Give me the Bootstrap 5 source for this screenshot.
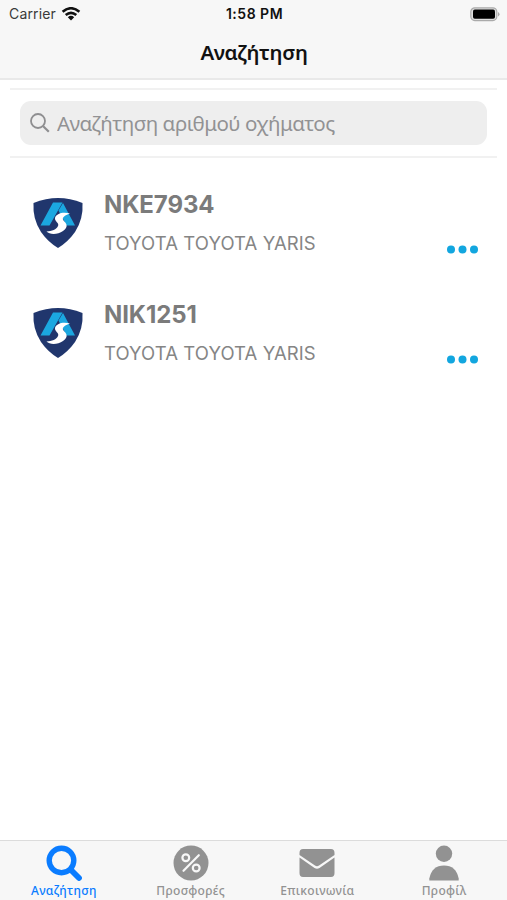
<!DOCTYPE html>
<html lang="el">
<head>
<meta charset="utf-8">
<meta name="viewport" content="width=device-width, initial-scale=1">
<title>Αναζήτηση</title>
<link href="https://cdn.jsdelivr.net/npm/bootstrap@5.3.0/dist/css/bootstrap.min.css" rel="stylesheet">
<style>
  body { font-family: Inter, "Noto Sans", sans-serif; background: #fff; }
  svg { display: block; flex: none; }
  .greek { font-family: "Noto Sans", sans-serif; }
  .top-bar { height: 80px; background: #f7f7f7; border-bottom: 2px solid #e9e9e9; }
  .status { height: 28px; padding: 0 7px 0 9px; font-size: 14px; line-height: 28px; color: #3a3a3a; }
  .carrier { letter-spacing: .15px; gap: 5px; }
  .clock { color: #111; font-weight: 600; font-size: 14px; letter-spacing: .5px; }
  .page-title { height: 50px; line-height: 49px; font-size: 20.5px; font-weight: 600; color: #111; letter-spacing: -.3px; padding-left: 1px; }
  .search-wrap { margin: 8px 10px 0; height: 70px; padding: 11px 10px 0; border-top: 2px solid #f1f1f1; border-bottom: 2px solid #f1f1f1; }
  .search-field { height: 44px; border-radius: 11px; background: #eee; padding: 0 10px; color: #8e8e90; }
  .search-field input, .search-field input:focus { font-size: 20.5px; line-height: 44px; letter-spacing: -.5px; color: #8e8e90; box-shadow: none; margin-left: 6px; }
  .search-field input::placeholder { color: #929294; opacity: 1; }
  .vehicles { padding-top: 12px; }
  .vehicle { height: 110px; padding: 20px 29px 0 32px; color: #7b7b7b; }
  .crest { margin-top: 7px; }
  .plate { font-size: 24px; line-height: 30px; font-weight: 700; letter-spacing: -.1px; }
  .model { font-size: 18.5px; line-height: 24px; margin-top: 11px; color: #858585; letter-spacing: .08px; }
  .more { padding-top: 54px; }
  .tab-bar { height: 60px; background: #f7f7f7; border-top: 1px solid #dcdcdc; }
  .tab-bar a { color: #929292; font-size: 12px; line-height: 16px; font-weight: 500; padding: 4px 0 0 1px; letter-spacing: .3px; }
  .tab-bar a.active { color: #0a7cff; }
  .tab-bar svg { margin-bottom: 2px; }
</style>
</head>
<body>
<svg width="0" height="0" class="d-none" aria-hidden="true">
  <symbol id="crest" viewBox="0 0 52 52">
    <path d="M1.5 6Q14 1 26 1T50.5 6Q51.5 22 43 35Q36 45 26 51Q16 45 9 35Q.5 22 1.5 6Z" fill="#20366d"/>
    <path d="M21 5.500H30.500L17.500 28.500H8.500ZM31 6L43 28.500H34.500L26.500 13.500Z" fill="#1ba7e0"/>
    <path d="M38 16.500C31 14.500 24 16.500 23 21C22.500 24.500 27.500 26 26 29C24.500 32.500 20 34 14.500 34.500C18 38 26 37.500 31 34C37 29.500 34.500 26.500 31.500 23.500C29.500 21 32.500 18 38 16.500Z" fill="#fff"/>
  </symbol>
</svg>
<main class="d-flex flex-column vh-100 overflow-hidden">
  <header class="top-bar flex-shrink-0">
    <div class="status row g-0 align-items-center">
      <div class="carrier col d-flex align-items-center">Carrier
        <svg width="20" height="14" viewBox="0 0 20 14" fill="none" stroke="#111" stroke-width="2.6"><path d="M1.6 4.7Q10-2.2 18.4 4.7M4.7 8Q10 3.6 15.3 8"/><path d="M10 13.4L6.8 10.2Q10 7.4 13.2 10.2Z" fill="#111" stroke="none"/></svg>
      </div>
      <div class="col-auto clock">1:58 PM</div>
      <div class="col d-flex justify-content-end">
        <svg width="30" height="15" viewBox="0 0 30 15"><rect x=".8" y=".8" width="26" height="12.8" rx="4" fill="#dedede" stroke="#aaa" stroke-width="1.2"/><rect x="3" y="2.6" width="22" height="9.2" rx="1.8"/><path d="M28 5Q31 7.2 28 9.5Z" fill="#aaa"/></svg>
      </div>
    </div>
    <h1 class="page-title greek text-center m-0">Αναζήτηση</h1>
  </header>
  <section class="search-wrap flex-shrink-0">
    <label class="search-field d-flex align-items-center">
      <svg width="21" height="21" viewBox="0 0 21 21" fill="none" stroke="currentColor" stroke-width="1.8"><circle cx="8" cy="8" r="7"/><path d="M13.2 13.2L18.8 18.8" stroke-width="2.2"/></svg>
      <input class="greek form-control border-0 bg-transparent p-0" type="text" placeholder="Αναζήτηση αριθμού οχήματος">
    </label>
  </section>
  <section class="vehicles flex-grow-1">
    <article class="vehicle d-flex">
      <svg class="crest" width="52" height="52"><use href="#crest"/></svg>
      <div class="ms-3 ps-1 flex-grow-1"><div class="plate">NKE7934</div><div class="model">TOYOTA TOYOTA YARIS</div></div>
      <div class="more"><svg width="32" height="10" fill="#12a6df"><circle cx="5" cy="5.5" r="4"/><circle cx="16.5" cy="5.5" r="4"/><circle cx="28" cy="5.5" r="4"/></svg></div>
    </article>
    <article class="vehicle d-flex">
      <svg class="crest" width="52" height="52"><use href="#crest"/></svg>
      <div class="ms-3 ps-1 flex-grow-1"><div class="plate">NIK1251</div><div class="model">TOYOTA TOYOTA YARIS</div></div>
      <div class="more"><svg width="32" height="10" fill="#12a6df"><circle cx="5" cy="5.5" r="4"/><circle cx="16.5" cy="5.5" r="4"/><circle cx="28" cy="5.5" r="4"/></svg></div>
    </article>
  </section>
  <nav class="tab-bar greek row g-0 flex-shrink-0 text-center">
    <a class="col active d-flex flex-column align-items-center text-decoration-none" href="#"><svg width="36" height="36" viewBox="0 0 36 36" fill="none" stroke="currentColor"><circle cx="15.5" cy="15.5" r="12.3" stroke-width="5.4"/><path d="M25 25L33 33" stroke-width="5.8" stroke-linecap="round"/></svg>Αναζήτηση</a>
    <a class="col d-flex flex-column align-items-center text-decoration-none" href="#"><svg width="36" height="36" viewBox="0 0 36 36"><circle cx="18" cy="18" r="17.5" fill="currentColor"/><g fill="none" stroke="#f7f7f7" stroke-width="2.2"><circle cx="12.8" cy="12.8" r="3.4"/><circle cx="23.2" cy="23" r="3.4"/><path d="M25.8 10.2L10.5 25.8" stroke-linecap="round"/></g></svg>Προσφορές</a>
    <a class="col d-flex flex-column align-items-center text-decoration-none" href="#"><svg width="36" height="36" viewBox="0 0 36 36" fill="currentColor"><path d="M4 4H32Q35.5 4 35.5 8V10L20 20.5Q18 22 16 20.5L.5 10V8Q.5 4 4 4ZM.5 12.5L15.5 23Q18 24.5 20.5 23L35.5 12.5V28Q35.5 32 32 32H4Q.5 32 .5 28Z"/></svg>Επικοινωνία</a>
    <a class="col d-flex flex-column align-items-center text-decoration-none" href="#"><svg width="36" height="36" viewBox="0 0 36 36" fill="currentColor"><circle cx="18" cy="8.7" r="8.2"/><path d="M3.3 35.5V33.5Q6 20.5 18 20.5T32.7 33.5V35.5Z"/></svg>Προφίλ</a>
  </nav>
</main>
<script src="https://cdn.jsdelivr.net/npm/bootstrap@5.3.0/dist/js/bootstrap.bundle.min.js"></script>
</body>
</html>
